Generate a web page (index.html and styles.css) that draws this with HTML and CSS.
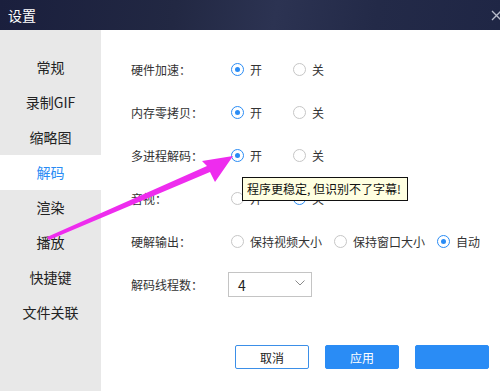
FILE: index.html
```html
<!DOCTYPE html>
<html lang="zh-CN">
<head>
<meta charset="utf-8">
<title>设置</title>
<link rel="stylesheet" href="styles.css">
</head>
<body>
<div class="window">
  <header class="titlebar">
    <span class="title">设置</span>
    <svg class="close" width="11" height="11" viewBox="0 0 11 11"><path d="M1 1 L10 10 M10 1 L1 10" stroke="#b8bccb" stroke-width="1.3" fill="none"/></svg>
  </header>
  <div class="main">
    <nav class="sidebar">
      <div class="nav-item">常规</div>
      <div class="nav-item">录制GIF</div>
      <div class="nav-item">缩略图</div>
      <div class="nav-item active">解码</div>
      <div class="nav-item">渲染</div>
      <div class="nav-item">播放</div>
      <div class="nav-item">快捷键</div>
      <div class="nav-item">文件关联</div>
    </nav>
    <section class="content">
      <div class="row">
        <span class="label">硬件加速：</span>
        <div class="options">
          <label class="opt fixed"><span class="radio checked"></span>开</label>
          <label class="opt fixed"><span class="radio"></span>关</label>
        </div>
      </div>
      <div class="row">
        <span class="label">内存零拷贝：</span>
        <div class="options">
          <label class="opt fixed"><span class="radio checked"></span>开</label>
          <label class="opt fixed"><span class="radio"></span>关</label>
        </div>
      </div>
      <div class="row">
        <span class="label">多进程解码：</span>
        <div class="options">
          <label class="opt fixed"><span class="radio checked"></span>开</label>
          <label class="opt fixed"><span class="radio"></span>关</label>
        </div>
      </div>
      <div class="row">
        <span class="label">音视：</span>
        <div class="options">
          <label class="opt fixed"><span class="radio"></span>开</label>
          <label class="opt fixed"><span class="radio checked"></span>关</label>
        </div>
      </div>
      <div class="row">
        <span class="label">硬解输出：</span>
        <div class="options wide">
          <label class="opt"><span class="radio"></span>保持视频大小</label>
          <label class="opt"><span class="radio"></span>保持窗口大小</label>
          <label class="opt"><span class="radio checked"></span>自动</label>
        </div>
      </div>
      <div class="row">
        <span class="label">解码线程数：</span>
        <div class="select">
          <span class="select-value">4</span>
          <svg class="chevron" width="10" height="6" viewBox="0 0 10 6"><path d="M0.5 0.5 L5 5 L9.5 0.5" stroke="#8a8a8a" stroke-width="1" fill="none"/></svg>
        </div>
      </div>
      <div class="buttons">
        <button class="btn btn-cancel">取消</button>
        <button class="btn btn-primary">应用</button>
        <button class="btn btn-primary"></button>
      </div>
    </section>
  </div>
  <div class="tooltip">程序更稳定, 但识别不了字幕!</div>
  <svg class="arrow" width="500" height="391" viewBox="0 0 500 391">
    <polygon points="47,237 207,166 202,161 233,156 215,182 210,172 49,240" fill="#ee2cee"/>
  </svg>
</div>
</body>
</html>
```
FILE: styles.css
```css
* { box-sizing: border-box; }
html, body { margin: 0; padding: 0; }
body {
  font-family: "Noto Sans CJK SC", "Noto Sans", sans-serif;
  color: #222;
  background: #fff;
}
.window {
  position: relative;
  width: 500px;
  height: 391px;
  overflow: hidden;
  display: flex;
  flex-direction: column;
}
.titlebar {
  height: 30px;
  flex: none;
  display: flex;
  align-items: center;
  justify-content: space-between;
  padding-left: 8px;
  background: linear-gradient(100deg, #1a1f3d 0%, #222843 35%, #2c3352 55%, #232a48 75%, #1f2645 100%);
}
.title {
  color: #fff;
  font-size: 14px;
  line-height: 30px;
}
.close {
  margin-right: -2px;
}
.main {
  flex: 1;
  display: flex;
}
.sidebar {
  width: 101px;
  flex: none;
  background: #e8e8e8;
  padding-top: 19.5px;
}
.nav-item {
  height: 35px;
  display: flex;
  align-items: center;
  justify-content: center;
  font-size: 14px;
  color: #222;
}
.nav-item.active {
  background: #fff;
  color: #2a8cf5;
}
.content {
  flex: 1;
  padding: 18px 11px 0 30px;
  display: flex;
  flex-direction: column;
}
.row {
  height: 43px;
  display: flex;
  align-items: center;
  font-size: 12px;
}
.label {
  width: 100px;
  flex: none;
  color: #333;
}
.options {
  display: flex;
  align-items: center;
}
.options.wide {
  gap: 12px;
}
.opt {
  display: flex;
  align-items: center;
  gap: 6px;
  color: #333;
}
.opt.fixed {
  width: 62px;
}
.radio {
  width: 13px;
  height: 13px;
  border-radius: 50%;
  border: 1px solid #c6c6c6;
  background: #fff;
  display: flex;
  align-items: center;
  justify-content: center;
  flex: none;
}
.radio.checked {
  border-color: #2a8cf5;
}
.radio.checked::after {
  content: "";
  width: 5px;
  height: 5px;
  border-radius: 50%;
  background: #2a8cf5;
}
.select {
  margin-left: -3px;
  width: 84px;
  height: 25px;
  border: 1px solid #c4c4c4;
  display: flex;
  align-items: center;
  justify-content: space-between;
  padding: 0 6px 0 9px;
}
.select-value {
  font-size: 14px;
  color: #222;
}
.chevron { margin-top: -3px; }
.buttons {
  margin-top: 39px;
  display: flex;
  justify-content: flex-end;
  gap: 16px;
}
.btn {
  width: 74px;
  height: 24px;
  font-family: inherit;
  font-size: 12px;
  padding: 0;
  border-radius: 2px;
  cursor: pointer;
}
.btn-cancel {
  background: #fff;
  border: 1px solid #3b8fe8;
  color: #222;
}
.btn-primary {
  background: #2a8cf5;
  border: 1px solid #2a8cf5;
  color: #fff;
}
.tooltip {
  position: absolute;
  left: 242px;
  top: 177px;
  width: 166px;
  height: 24px;
  background: #ffffe1;
  border: 1px solid #111;
  font-size: 12px;
  line-height: 22px;
  padding-left: 4px;
  color: #111;
  white-space: nowrap;
}
.arrow {
  position: absolute;
  left: 0;
  top: 0;
  pointer-events: none;
}
```
